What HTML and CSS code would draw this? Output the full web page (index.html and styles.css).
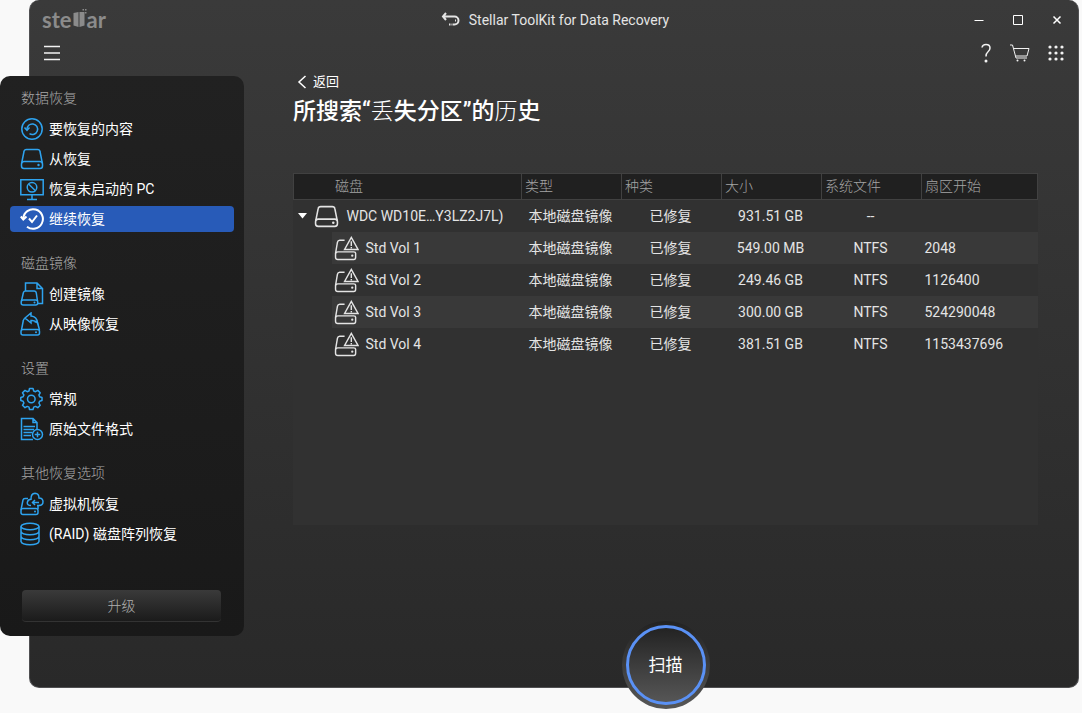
FILE: index.html
```
<!DOCTYPE html>
<html lang="zh-CN">
<head>
<meta charset="utf-8">
<meta name="viewport" content="width=device-width, initial-scale=1">
<title>Stellar ToolKit for Data Recovery</title>
<link rel="stylesheet" href="styles.css">
</head>
<body>
<svg class="defs" width="0" height="0" aria-hidden="true">
  <symbol id="drive" viewBox="0 0 24 24"><path d="M1.7 16 4 4.500Q4.300 2.500 6.500 2.500H17.500Q19.700 2.500 20 4.500L22.300 16"/><rect x="1.500" y="14.500" width="21" height="7" rx="2.500"/><circle class="dot" cx="18.500" cy="18" r="1.200"/></symbol>
  <symbol id="drive-alert" viewBox="0 0 26 26"><path d="M11 4.500H6Q4 4.500 3.600 6.500L1.600 18M1.600 18V22Q1.600 24.400 4 24.400H20.500Q22.500 24.400 22.500 22V18Q22.500 16.500 20.500 16.500H4Q1.600 16.500 1.600 19"/><path d="M18 1.500 25 14H11Z"/><path d="M18 5.500V10.500M18 11.500V13" /><circle class="dot" cx="19" cy="20.500" r="1.200"/></symbol>
</svg>

<div class="window">
  <header class="titlebar">
    <div class="logo"><span>ste</span><svg width="14" height="20" viewBox="0 0 13 20" aria-hidden="true"><path d="M0 4 5 3V18L0 16.500ZM6 3H11V16.500L6 18Z"/><path d="M9 0h1.500v1.500H9ZM11.500 0H13v1.500H11.500ZM11.500 3H13V4.500H11.500Z"/></svg><span>ar</span></div>
    <div class="title">
      <svg width="20" height="16" viewBox="0 0 20 16" aria-hidden="true"><path d="M5 1 2 4.500 5 8M2.500 4.500H13.500A4 4 0 0 1 13.500 12.500H12"/><path d="M14 8.500h1M8 12.500h1.500M10.500 12.500h1"/></svg>
      <span>Stellar ToolKit for Data Recovery</span>
    </div>
    <div class="controls">
      <button aria-label="最小化"><svg width="10" height="10" viewBox="0 0 10 10"><path d="M0.500 5.500H9.500"/></svg></button>
      <button aria-label="最大化"><svg width="10" height="10" viewBox="0 0 10 10"><path d="M0.500 0.500H9.500V9.500H0.500Z"/></svg></button>
      <button aria-label="关闭"><svg class="close" width="10" height="10" viewBox="0 0 10 10"><path d="M1.500 1.500 8.500 8.500M8.500 1.500 1.500 8.500"/></svg></button>
    </div>
  </header>

  <div class="toolbar">
    <button class="burger" aria-label="菜单"><svg width="16" height="16" viewBox="0 0 16 16"><path d="M0 1.500H16M0 8H16M0 14.500H16"/></svg></button>
    <div class="tools">
      <button aria-label="帮助"><svg width="12" height="20" viewBox="0 0 12 20"><path d="M2 4.500Q2.500 1.500 6 1.500Q10 1.500 10 5Q10 7 8 8.800Q6 10.500 6 13.500"/><circle class="dot" cx="6" cy="18" r="1.500"/></svg></button>
      <button aria-label="购物车"><svg class="thin" width="20" height="20" viewBox="0 0 20 20"><path d="M0 2H2.500L6 15H17M3.500 5.500H19L17 13H5.500"/><circle class="dot" cx="7.500" cy="17.500" r="1"/><circle class="dot" cx="14.500" cy="17.500" r="1"/></svg></button>
      <button aria-label="更多"><svg width="16" height="16" viewBox="0 0 16 16"><g class="dot"><circle cx="2" cy="2" r="1.600"/><circle cx="8" cy="2" r="1.600"/><circle cx="14" cy="2" r="1.600"/><circle cx="2" cy="8" r="1.600"/><circle cx="8" cy="8" r="1.600"/><circle cx="14" cy="8" r="1.600"/><circle cx="2" cy="14" r="1.600"/><circle cx="8" cy="14" r="1.600"/><circle cx="14" cy="14" r="1.600"/></g></svg></button>
    </div>
  </div>

  <div class="body">
    <nav class="sidebar">
      <section>
        <h2>数据恢复</h2>
        <button><svg viewBox="0 0 24 24"><circle cx="12" cy="12" r="10.200"/><path d="M7 12.500A5.300 5.300 0 1 1 9.500 16.700"/><path d="M4.500 10.500 7 13.300 9.500 10.500"/></svg>要恢复的内容</button>
        <button><svg viewBox="0 0 24 24"><use href="#drive"/></svg>从恢复</button>
        <button><svg viewBox="0 0 24 24"><path d="M.8 2.800H23.200V17.800H.8ZM12 17.800V22.500M7 22.500H17"/><circle cx="12" cy="10.300" r="4.800"/><path d="M8.600 7 15.400 13.700"/></svg>恢复未启动的 PC</button>
        <button class="active"><svg viewBox="0 0 24 24"><path d="M3.300 11.500A9.800 9.800 0 1 1 7 19.700"/><path d="M.8 9.500 3.300 12.500 6.500 9.500"/><path d="M9 11.500 12 15 17 8.500"/></svg>继续恢复</button>
      </section>
      <section>
        <h2>磁盘镜像</h2>
        <button><svg viewBox="0 0 24 24"><path d="M5.500 9V1H17L22.500 6.500V21.500H18M17 1V6.500H22.500"/><path d="M1.500 19 3.300 11Q3.600 9 5.500 9H14Q16 9 16.300 11L17.500 19"/><rect x="1.200" y="18" width="16.500" height="5" rx="2"/><circle class="dot" cx="14.500" cy="20.500" r="1"/></svg>创建镜像</button>
        <button><svg viewBox="0 0 24 24"><path d="M1.500 18 3.300 8.500Q3.600 6.500 5.500 6.500M14.500 10Q17.400 9 17.600 11L19.500 18"/><path d="M5 6 11 1V4Q17 4.500 17.500 11Q15 8 11 8.500V11Z"/><rect x="1" y="17.500" width="18.500" height="5.500" rx="2"/><circle class="dot" cx="16" cy="20.200" r="1"/></svg>从映像恢复</button>
      </section>
      <section>
        <h2>设置</h2>
        <button><svg viewBox="0 0 24 24"><circle cx="11.300" cy="12" r="3.800"/><path stroke-linejoin="round" d="M9 4 9.500 1.500H13L13.700 4 15.500 4.700 17.800 3.400 20.200 5.800 18.900 8 19.600 9.800 22 10.400V13.600L19.600 14.200 18.900 16 20.200 18.300 17.800 20.700 15.500 19.400 13.700 20.100 13 22.500H9.500L9 20.100 7.200 19.400 5 20.700 2.500 18.300 3.900 16 3.100 14.200.8 13.600V10.400L3.100 9.800 3.900 8 2.500 5.800 5 3.400 7.200 4.700Z"/></svg>常规</button>
        <button><svg viewBox="0 0 24 24"><path d="M13 22.500H1.500V1.500H13L17 5.500V13M13 1.500V5.500H17M3.500 9.500H15M3.500 12.500H14M3.500 15.500H12M3.500 18.500H11"/><circle cx="17.500" cy="17.500" r="5"/><path d="M17.500 14.700V20.300M14.700 17.500H20.300"/></svg>原始文件格式</button>
      </section>
      <section>
        <h2>其他恢复选项</h2>
        <button><svg viewBox="0 0 24 24"><path d="M1 18 3 8Q3.300 6.500 5 6.500H8"/><rect x="1" y="16.500" width="17" height="6" rx="2"/><path d="M18 17V14M11 13.500Q7 13.500 7.300 10.500Q7.700 7.500 11 7.300Q10.800 1.500 15 1.300Q19 1.500 19 6Q23 6.200 23 9.800Q23 13.500 19 13.500H17M12.500 10.500H19M15 8 12.500 10.500 15 13"/><circle class="dot" cx="15" cy="19.500" r="1"/></svg>虚拟机恢复</button>
        <button><svg viewBox="0 0 24 24"><ellipse cx="10" cy="4.500" rx="9" ry="3.200"/><path d="M1 4.500V19.500Q2 22.800 10 22.800T19 19.500V4.500M1 9.500Q2 12.800 10 12.800T19 9.500M1 14.500Q2 17.800 10 17.800T19 14.500"/></svg>(RAID) 磁盘阵列恢复</button>
      </section>
      <button class="upgrade">升级</button>
    </nav>

    <main>
      <button class="back"><svg width="10" height="14" viewBox="0 0 10 14"><path d="M8.500 1 2 7 8.500 13"/></svg>返回</button>
      <h1>所搜索“<span>丢</span>失分区”的<span>历</span>史</h1>
      <div class="panel">
        <table>
          <thead>
            <tr><th class="disk">磁盘</th><th>类型</th><th>种类</th><th>大小</th><th>系统文件</th><th class="sector">扇区开始</th></tr>
          </thead>
          <tbody>
            <tr><td><div class="root"><svg class="caret" width="9" height="6" viewBox="0 0 9 6"><path d="M0 0H9L4.500 5.500Z"/></svg><svg class="icon" viewBox="0 0 24 24"><use href="#drive"/></svg>WDC WD10E…Y3LZ2J7L)</div></td><td>本地磁盘镜像</td><td>已修复</td><td>931.51 GB</td><td>--</td><td></td></tr>
            <tr class="odd"><td><div class="vol"><svg class="icon" viewBox="0 0 26 26"><use href="#drive-alert"/></svg>Std Vol 1</div></td><td>本地磁盘镜像</td><td>已修复</td><td>549.00 MB</td><td>NTFS</td><td>2048</td></tr>
            <tr><td><div class="vol"><svg class="icon" viewBox="0 0 26 26"><use href="#drive-alert"/></svg>Std Vol 2</div></td><td>本地磁盘镜像</td><td>已修复</td><td>249.46 GB</td><td>NTFS</td><td>1126400</td></tr>
            <tr class="odd"><td><div class="vol"><svg class="icon" viewBox="0 0 26 26"><use href="#drive-alert"/></svg>Std Vol 3</div></td><td>本地磁盘镜像</td><td>已修复</td><td>300.00 GB</td><td>NTFS</td><td>524290048</td></tr>
            <tr><td><div class="vol"><svg class="icon" viewBox="0 0 26 26"><use href="#drive-alert"/></svg>Std Vol 4</div></td><td>本地磁盘镜像</td><td>已修复</td><td>381.51 GB</td><td>NTFS</td><td>1153437696</td></tr>
          </tbody>
        </table>
      </div>
      <button class="scan"><span>扫描</span></button>
    </main>
  </div>
</div>
</body>
</html>
```
FILE: styles.css
```
* { box-sizing: border-box; }

body {
  margin: 0;
  background: #f9f9f9;
  color: #e4e4e4;
  font: 14px/20px Roboto, "Noto Sans CJK SC", sans-serif;
}

.defs { position: absolute; }

button {
  margin: 0;
  padding: 0;
  border: 0;
  background: none;
  color: inherit;
  font: inherit;
  cursor: pointer;
}

svg {
  display: block;
  flex: none;
  fill: none;
  stroke: currentColor;
  stroke-width: 1.5;
}

.dot { fill: currentColor; stroke: none; }

.window {
  display: flex;
  flex-direction: column;
  min-height: calc(100vh - 25px);
  margin: 0 3px 25px 29px;
  border: 1px solid #505052;
  border-top: 0;
  border-radius: 10px;
  background: linear-gradient(#3a3a3a, #292929);
}

.titlebar {
  display: grid;
  grid-template-columns: 1fr auto 1fr;
  align-items: center;
  height: 39px;
  padding: 0 10px 0 12px;
}

.logo {
  display: flex;
  align-items: center;
  color: #8b8b8b;
  font: bold 22px/24px Lato, sans-serif;
}

.logo svg {
  margin: 0 0 2px 1px;
  fill: currentColor;
  stroke: none;
}

.title { display: flex; align-items: center; gap: 8px; }

.title svg { stroke-width: 2; }

.controls { display: flex; justify-content: flex-end; gap: 17px; }

.controls button {
  display: grid;
  place-items: center;
  width: 22px;
  height: 22px;
  color: #fff;
}

.controls svg { stroke-width: 1; }

.controls .close { stroke-width: 1.5; }

.toolbar {
  display: flex;
  align-items: center;
  justify-content: space-between;
  height: 37px;
  padding: 0 14px 10px 14px;
  color: #f2f2f2;
}

.tools { display: flex; align-items: center; gap: 18px; }

.thin { stroke-width: 1; }

.body { display: flex; flex: 1; }

.sidebar {
  display: flex;
  flex: none;
  flex-direction: column;
  align-self: flex-start;
  gap: 21px;
  width: 244px;
  margin: 0 0 51px -30px;
  padding: 12px 10px 14px;
  border-radius: 10px;
  background: linear-gradient(#212121, #191919);
}

.sidebar section { display: flex; flex-direction: column; gap: 4px; }

.sidebar h2 {
  margin: 0 0 4px;
  padding-left: 11px;
  color: #a8a8a8;
  font: inherit;
  font-weight: 300;
}

.sidebar section button {
  display: flex;
  align-items: center;
  gap: 5px;
  height: 26px;
  padding-left: 10px;
  border-radius: 4px;
  color: #fff;
}

.sidebar svg { width: 24px; height: 24px; color: #2ea3ef; }

.sidebar .active { background: #285bb8; }

.sidebar .active svg { color: #fff; stroke-width: 2; }

.upgrade {
  height: 32px;
  margin: 22px 13px 0 12px;
  border-bottom: 1px solid #333;
  border-radius: 4px;
  background: linear-gradient(#3a3a3a, #1b1b1b);
  color: #b0b0b0;
  font-weight: 300;
}

main {
  display: flex;
  flex: 1;
  flex-direction: column;
  min-width: 0;
  padding: 0 40px 0 49px;
}

.back {
  display: flex;
  align-items: center;
  align-self: flex-start;
  gap: 6px;
  height: 12px;
  padding-left: 4px;
  color: #fff;
  font-size: 13px;
}

h1 {
  margin: 9px 0 46px;
  color: #fff;
  font-size: 23px;
  font-weight: 500;
  line-height: 30px;
}

h1 span { font-weight: 300; }

.panel { min-height: 352px; background: #313131; }

table {
  width: 100%;
  border-collapse: collapse;
  table-layout: fixed;
}

th {
  width: 100px;
  height: 26px;
  padding: 0 3px 2px;
  border: 1px solid #414141;
  background: #202020;
  color: #a4a4a4;
  font-weight: 300;
  text-align: left;
}

.disk { width: auto; padding-left: 41px; }

.sector { width: 116px; }

td { height: 32px; padding: 0 2px 0 0; text-align: center; }

td:first-child { padding: 0; }

td:last-child { padding-left: 3px; text-align: left; }

.root, .vol { display: flex; align-items: center; height: 32px; }

.root { gap: 7px; padding-left: 4px; }

.vol { gap: 7px; margin-left: 38px; padding-left: 2px; }

.icon { width: 25px; height: 25px; }

.root .icon { margin-right: 1px; }

.caret { fill: #fff; stroke: none; }

.odd td:not(:first-child), .odd .vol { background: #393939; }

.scan {
  display: grid;
  align-self: center;
  width: 88px;
  height: 88px;
  margin: auto 0 -22px;
  padding: 4px;
  border-radius: 50%;
  background: linear-gradient(#222, #575757);
  color: #fff;
  font-size: 17px;
}

.scan span {
  display: grid;
  place-items: center;
  border: 3px solid #5a91f5;
  border-radius: 50%;
  background: linear-gradient(#232323, #565656);
}
```
